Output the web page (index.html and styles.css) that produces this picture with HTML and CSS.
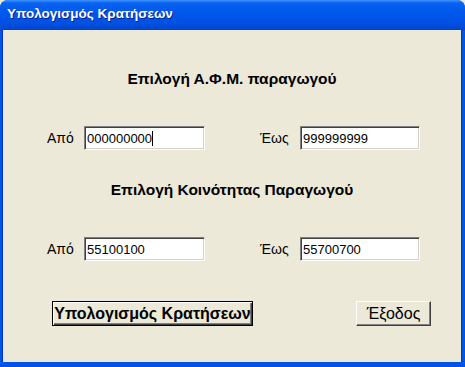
FILE: index.html
```html
<!DOCTYPE html>
<html lang="el">

<head>
    <meta charset="UTF-8">
    <title>Υπολογισμός Κρατήσεων</title>
    <link rel="stylesheet" href="styles.css">
</head>

<body>
    <div class="window">
        <div class="titlebar">Υπολογισμός Κρατήσεων</div>
        <div class="content">
            <h2>Επιλογή Α.Φ.Μ. παραγωγού</h2>
            <div class="row">
                <label>Από</label>
                <span class="field">000000000<span class="caret"></span></span>
                <span></span>
                <label>Έως</label>
                <span class="field">999999999</span>
            </div>

            <h2 class="second">Επιλογή Κοινότητας Παραγωγού</h2>
            <div class="row">
                <label>Από</label>
                <span class="field">55100100</span>
                <span></span>
                <label>Έως</label>
                <span class="field">55700700</span>
            </div>

            <div class="actions">
                <button class="btn default">Υπολογισμός Κρατήσεων</button>
                <button class="btn exit">Έξοδος</button>
            </div>
        </div>
    </div>
</body>

</html>
```

FILE: styles.css
```css
:root {
    --face: #ece9d8;
    --shadow: #808080;
    --dark: #404040;
    --light: #fff;
    --xp-blue: #0054e3;
    --xp-blue-dark: #0831d9;
}

body {
    margin: 0;
    padding: 0;
    font-family: "Liberation Sans", Arial, sans-serif;
    background-color: var(--face);
}

.window {
    width: 465px;
    height: 367px;
    box-sizing: border-box;
    display: flex;
    flex-direction: column;
    background-color: var(--xp-blue);
    border-radius: 8px 8px 0 0;
    overflow: hidden;
}

.titlebar {
    height: 30px;
    flex: none;
    box-sizing: border-box;
    padding: 6px 0 0 7px;
    color: var(--light);
    font-weight: bold;
    font-size: 13.5px;
    text-shadow: 1px 1px 0 #0a1f8f;
    background: linear-gradient(to bottom, #3d95ff 0, #0a62f0 3px, #0058ee 12px, #0050e0 24px, #0043cf 30px);
}

.content {
    flex: 1;
    margin: 0 4px 5px 3px;
    background-color: var(--face);
    box-shadow: -1px 0 0 var(--xp-blue-dark), 1px 0 0 var(--xp-blue-dark);
    padding-top: 40px;
}

h2 {
    margin: 0;
    font-size: 15.5px;
    font-weight: bold;
    text-align: center;
    line-height: 18px;
    color: #000;
}

h2.second {
    margin-top: 31px;
}

.row {
    display: grid;
    grid-template-columns: 37px 121px 55px 40px 120px;
    align-items: center;
    padding-left: 44px;
    margin-top: 38px;
}

.row label {
    font-size: 14px;
}

.field {
    display: block;
    height: 24px;
    box-sizing: border-box;
    padding: 4px 0 0 2px;
    background-color: var(--light);
    border: 1px solid;
    border-color: var(--shadow) var(--light) var(--light) var(--shadow);
    box-shadow: inset 1px 1px 0 var(--dark), inset -1px -1px 0 #d4d0c8;
    font-size: 13px;
    line-height: 15px;
}

.caret {
    display: inline-block;
    width: 1px;
    height: 15px;
    background-color: #000;
    vertical-align: top;
}

.actions {
    display: flex;
    justify-content: space-between;
    padding: 0 30px 0 49px;
    margin-top: 40px;
}

.btn {
    height: 25px;
    margin: 0;
    padding: 0;
    font-family: inherit;
    font-size: 16px;
    color: #000;
    background-color: var(--face);
    border: 1px solid;
    border-color: var(--light) var(--dark) var(--dark) var(--light);
    box-shadow: inset -1px -1px 0 var(--shadow);
}

.btn.default {
    width: 201px;
    font-weight: bold;
    border-color: #000;
    box-shadow: inset 1px 1px 0 var(--light), inset -1px -1px 0 var(--dark), inset -2px -2px 0 var(--shadow);
}

.btn.exit {
    width: 75px;
}
```
